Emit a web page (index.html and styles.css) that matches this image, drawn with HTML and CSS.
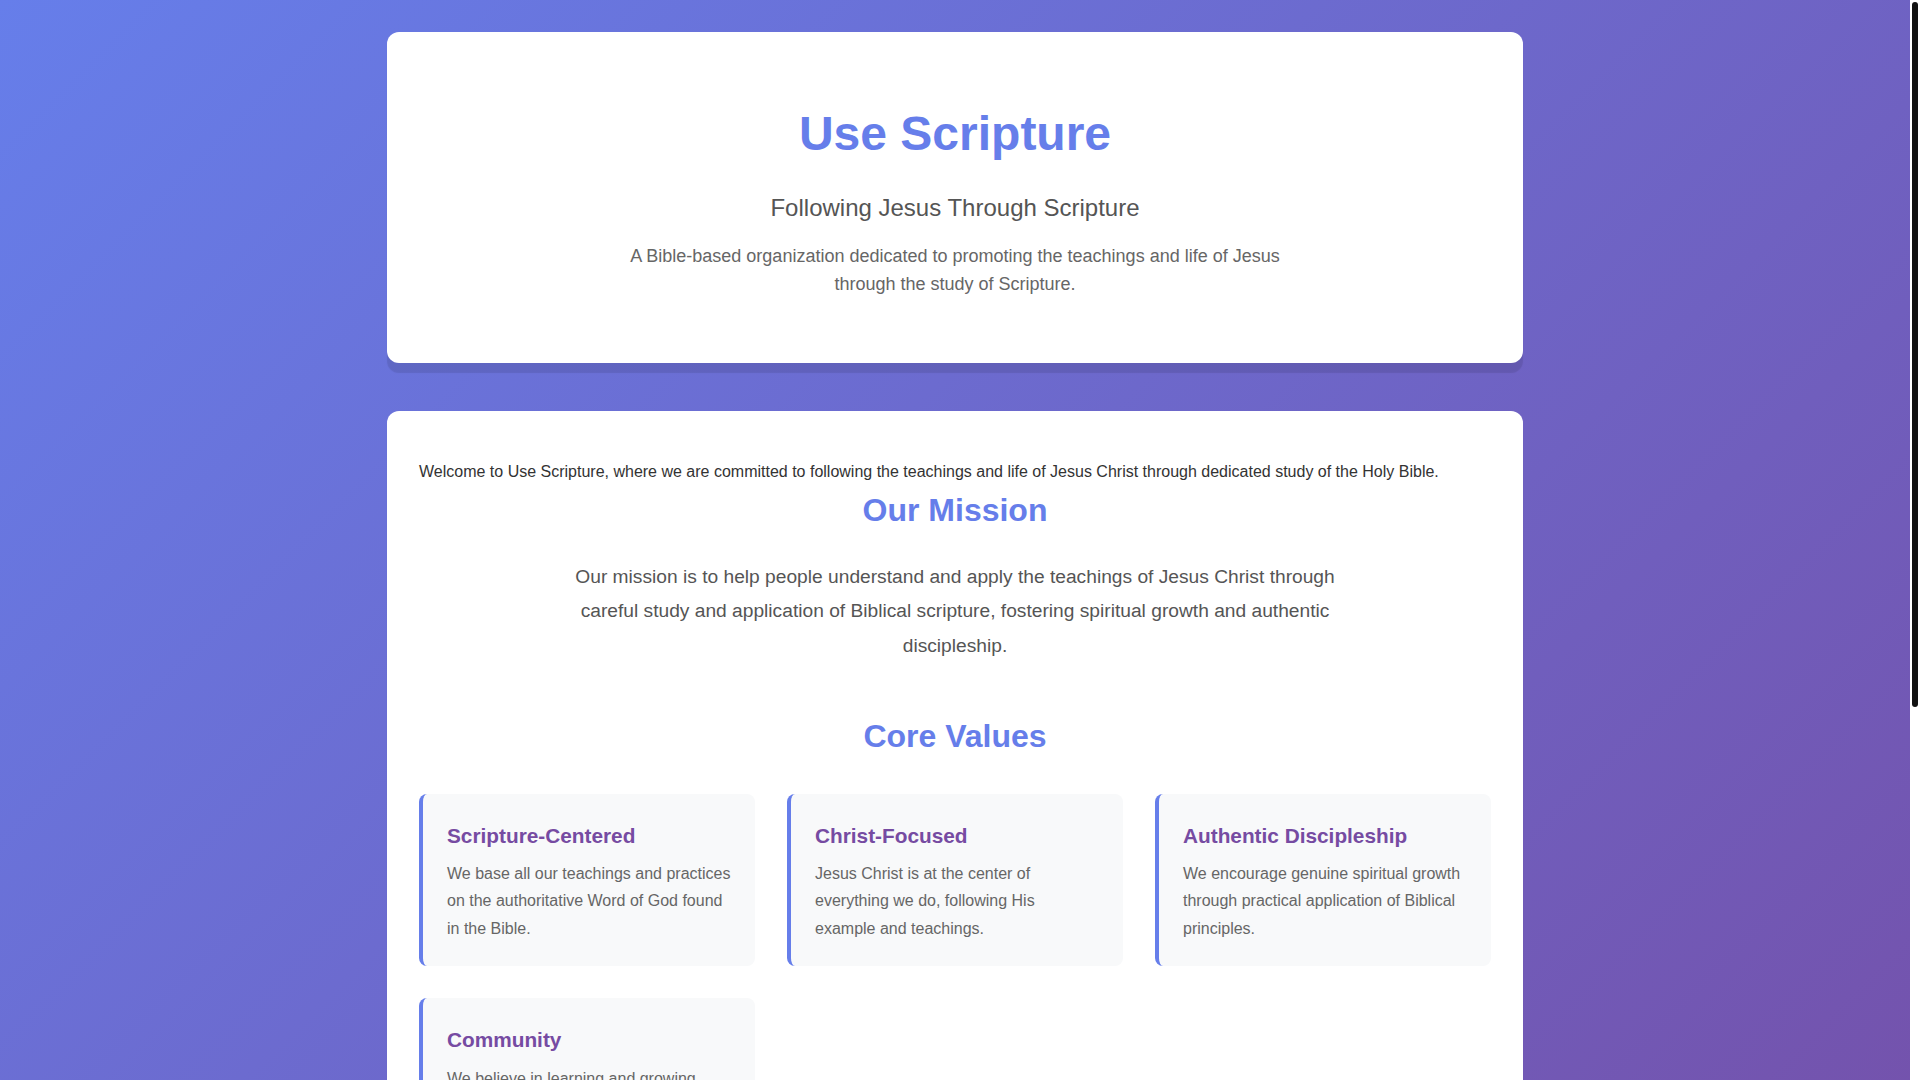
FILE: index.html
```html
<!DOCTYPE html>
<html lang="en">
<head>
<meta charset="UTF-8">
<meta name="viewport" content="width=device-width, initial-scale=1.0">
<title>Use Scripture</title>
<link rel="stylesheet" href="styles.css">
</head>
<body>
<div class="container">
  <header class="card hero">
    <h1 class="hero-title">Use Scripture</h1>
    <p class="hero-subtitle">Following Jesus Through Scripture</p>
    <p class="hero-text">A Bible-based organization dedicated to promoting the teachings and life of Jesus through the study of Scripture.</p>
  </header>

  <main class="card content">
    <p class="welcome">Welcome to Use Scripture, where we are committed to following the teachings and life of Jesus Christ through dedicated study of the Holy Bible.</p>

    <section class="section">
      <h2 class="section-title">Our Mission</h2>
      <p class="mission-text">Our mission is to help people understand and apply the teachings of Jesus Christ through careful study and application of Biblical scripture, fostering spiritual growth and authentic discipleship.</p>
    </section>

    <section class="section">
      <h2 class="section-title">Core Values</h2>
      <div class="values-grid">
        <div class="value-card">
          <h3 class="value-title">Scripture-Centered</h3>
          <p class="value-text">We base all our teachings and practices on the authoritative Word of God found in the Bible.</p>
        </div>
        <div class="value-card">
          <h3 class="value-title">Christ-Focused</h3>
          <p class="value-text">Jesus Christ is at the center of everything we do, following His example and teachings.</p>
        </div>
        <div class="value-card">
          <h3 class="value-title">Authentic Discipleship</h3>
          <p class="value-text">We encourage genuine spiritual growth through practical application of Biblical principles.</p>
        </div>
        <div class="value-card">
          <h3 class="value-title">Community</h3>
          <p class="value-text">We believe in learning and growing together as a community of believers.</p>
        </div>
      </div>
    </section>
  </main>

  <footer class="card footer">
    <h2 class="section-title footer-title">Join Us</h2>
    <p class="footer-text">Study the Word with us and grow in your walk with Jesus Christ.</p>
    <p class="footer-copy">&copy; 2024 Use Scripture. All rights reserved.</p>
  </footer>
</div>

<div class="scroll-rail" aria-hidden="true"><div class="scroll-thumb"></div></div>
</body>
</html>
```

FILE: styles.css
```css
* {
  box-sizing: border-box;
}

html {
  min-height: 100%;
  background: linear-gradient(135deg, #667eea 0%, #764ba2 100%);
}

body {
  margin: 0 10px 0 0;
  font-family: "Liberation Sans", Arial, sans-serif;
  line-height: 1.6;
  color: #333;
}

.scroll-rail {
  position: fixed;
  top: 0;
  right: 0;
  width: 10px;
  height: 100vh;
  background: #fff;
}

.scroll-thumb {
  position: absolute;
  top: 2px;
  left: 2px;
  width: 6px;
  height: 705px;
  background: #111;
  border-radius: 3px;
}

.container {
  max-width: 1200px;
  margin: 0 auto;
  padding: 32px 32px 112px;
}

.card {
  background: #fff;
  border-radius: 12px;
  box-shadow: 0 10px 1px rgba(0, 0, 0, 0.1);
  margin-bottom: 48px;
}

/* hero */
.hero {
  padding: 64px 32px;
  text-align: center;
}

.hero-title {
  margin: 0 0 16px;
  font-size: 48px;
  font-weight: 700;
  color: #667eea;
}

.hero-subtitle {
  margin: 0 0 16px;
  font-size: 24px;
  color: #555;
}

.hero-text {
  max-width: 700px;
  margin: 0 auto;
  font-size: 18px;
  line-height: 1.55;
  color: #666;
}

/* main content */
.content {
  padding: 32px;
}

.welcome {
  margin: 16px 0 0;
  font-size: 16px;
  color: #333;
}

.section {
  margin-bottom: 48px;
}

.section-title {
  margin: 0 0 24px;
  font-size: 32px;
  font-weight: 700;
  color: #667eea;
  text-align: center;
}

.mission-text {
  max-width: 800px;
  margin: 0 auto;
  font-size: 19.2px;
  line-height: 1.8;
  color: #555;
  text-align: center;
}

.values-grid {
  display: grid;
  grid-template-columns: repeat(3, 1fr);
  gap: 32px;
  margin-top: 31px;
}

.value-card {
  background: #f8f9fa;
  border-left: 4px solid #667eea;
  border-radius: 8px;
  padding: 25px 24px 24px;
}

.value-title {
  margin: 0 0 8px;
  font-size: 20.8px;
  font-weight: 700;
  color: #764ba2;
}

.value-text {
  margin: 0;
  font-size: 16px;
  line-height: 1.72;
  color: #666;
}

/* footer */
.footer {
  padding: 48px 32px;
  text-align: center;
  margin-bottom: 0;
}

.footer-title {
  margin-bottom: 16px;
}

.footer-text {
  margin: 0 0 16px;
  color: #666;
}

.footer-copy {
  margin: 0;
  font-size: 14px;
  color: #888;
}
```
